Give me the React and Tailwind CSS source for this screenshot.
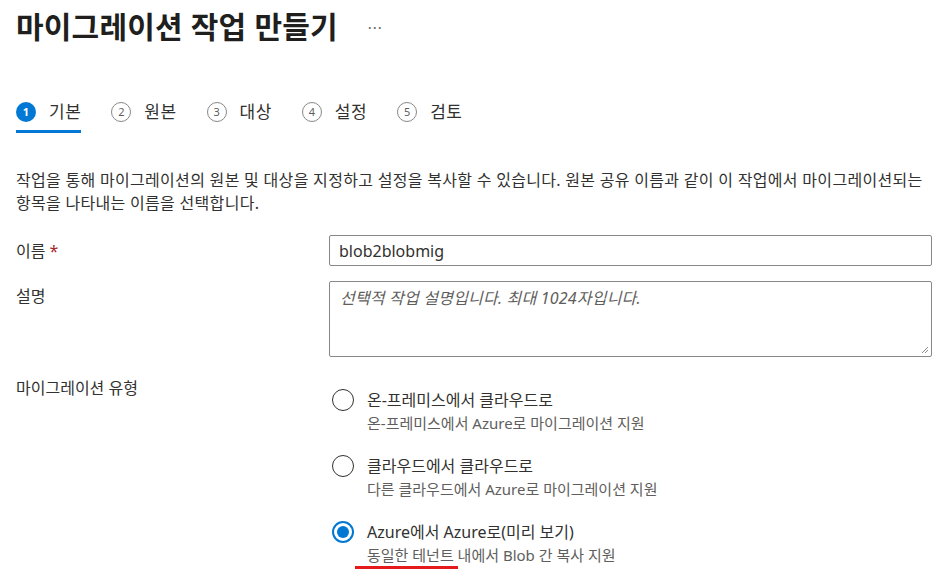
const steps = ["기본", "원본", "대상", "설정", "검토"];

const options = [
  { title: "온-프레미스에서 클라우드로", sub: "온-프레미스에서 Azure로 마이그레이션 지원" },
  { title: "클라우드에서 클라우드로", sub: "다른 클라우드에서 Azure로 마이그레이션 지원" },
  { title: "Azure에서 Azure로(미리 보기)", sub: "동일한 테넌트 내에서 Blob 간 복사 지원", checked: true },
];

export default function App() {
  return (
    <div className="w-[940px] h-[584px] bg-white overflow-hidden px-4 text-[#323130] font-['Noto_Sans','Noto_Sans_CJK_KR',sans-serif]">
      {/* Title */}
      <div className="flex items-center h-[54px]">
        <h1 className="text-[30px] font-bold text-[#201f1e] leading-none tracking-[0.2px]">마이그레이션 작업 만들기</h1>
        <span className="ml-[30px] text-[15px] text-[#605e5c] tracking-[1px]">···</span>
      </div>

      {/* Steps */}
      <div className="flex mt-[48px] h-[34px]">
        {steps.map((s, i) => (
          <div key={s} className="relative flex items-start mr-[30px]">
            <div className="flex items-center h-5">
              <span
                className={
                  i === 0
                    ? "w-5 h-5 rounded-full bg-[#0078d4] text-white text-[11px] font-bold flex items-center justify-center"
                    : "w-5 h-5 rounded-full border border-[#8a8886] text-[#605e5c] text-[11px] flex items-center justify-center"
                }
              >
                {i + 1}
              </span>
              <span className="ml-[13px] text-[17px] tracking-[0.5px] text-[#323130]">{s}</span>
            </div>
            {i === 0 && <div className="absolute left-0 right-0 top-[28px] h-[3px] bg-[#0078d4]" />}
          </div>
        ))}
      </div>

      {/* Description */}
      <p className="mt-[33px] w-[910px] text-[16px] leading-[23px] tracking-[0.3px] text-[#323130]">
        작업을 통해 마이그레이션의 원본 및 대상을 지정하고 설정을 복사할 수 있습니다. 원본 공유 이름과 같이 이 작업에서 마이그레이션되는 항목을 나타내는 이름을 선택합니다.
      </p>

      {/* Form */}
      <div className="mt-[20px] grid grid-cols-[313px_603px] gap-y-[15px] text-[16px]">
        <div className="flex items-center">
          이름 <span className="ml-1 text-[#a4262c]">*</span>
        </div>
        <div className="h-[31px] border border-[#8a8886] rounded-[2px] px-[9px] flex items-center text-[16px] text-[#323130]">
          blob2blobmig
        </div>

        <div className="pt-[4px] leading-[22px]">설명</div>
        <div className="relative h-[76px] border border-[#8a8886] rounded-[2px] px-[10px] pt-[4px] text-[16px] tracking-[0.2px] text-[#605e5c] italic">
          선택적 작업 설명입니다. 최대 1024자입니다.
          <svg className="absolute right-[2px] bottom-[2px]" width="8" height="8" viewBox="0 0 8 8">
            <path d="M7 1L1 7M7 4L4 7" stroke="#8a8886" strokeWidth="1" />
          </svg>
        </div>

        <div className="pt-[5px] leading-[22px]">마이그레이션 유형</div>
        <div className="pt-[17px] flex flex-col gap-[21px]">
          {options.map((o) => (
            <div key={o.title} className="flex items-start">
              <span
                className={
                  o.checked
                    ? "ml-[3px] w-[22px] h-[22px] rounded-full border-2 border-[#0078d4] flex items-center justify-center shrink-0"
                    : "ml-[3px] w-[22px] h-[22px] rounded-full border-[1.5px] border-[#323130] shrink-0"
                }
              >
                {o.checked && <span className="w-[12px] h-[12px] rounded-full bg-[#0078d4]" />}
              </span>
              <div className="ml-[13px]">
                <div className="text-[16px] leading-[22px] text-[#323130]">{o.title}</div>
                <div className="relative mt-[1px] text-[15px] leading-[22px] text-[#605e5c]">
                  {o.sub}
                  {o.checked && <span className="absolute left-[-12px] w-[103px] top-[22px] h-[3px] bg-[#e51a1a]" />}
                </div>
              </div>
            </div>
          ))}
        </div>
      </div>
    </div>
  );
}
